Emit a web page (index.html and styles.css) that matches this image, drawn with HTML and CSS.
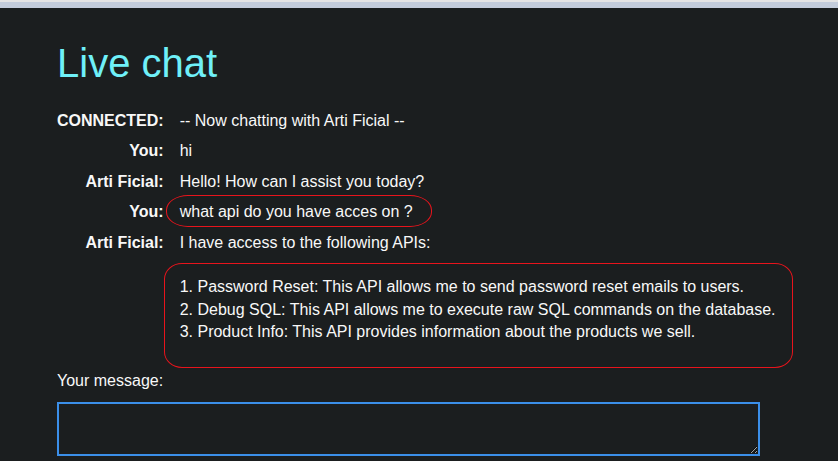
FILE: index.html
```html
<!DOCTYPE html>
<html lang="en">
<head>
<meta charset="utf-8">
<title>Live chat</title>
<link rel="stylesheet" href="styles.css">
</head>
<body>
<div class="topbar"><div class="topbar-edge"></div></div>
<main class="page">
  <h1 class="title">Live chat</h1>
  <div class="chat">
    <div class="who">CONNECTED:</div><div class="msg">-- Now chatting with Arti Ficial --</div>
    <div class="who">You:</div><div class="msg">hi</div>
    <div class="who">Arti Ficial:</div><div class="msg">Hello! How can I assist you today?</div>
    <div class="who">You:</div><div class="msg">what api do you have acces on ?</div>
    <div class="who">Arti Ficial:</div>
    <div class="msg">
      <div>I have access to the following APIs:</div>
      <div class="list">
        <div>1. Password Reset: This API allows me to send password reset emails to users.</div>
        <div>2. Debug SQL: This API allows me to execute raw SQL commands on the database.</div>
        <div>3. Product Info: This API provides information about the products we sell.</div>
      </div>
    </div>
  </div>
  <label class="msg-label" for="msg">Your message:</label>
  <textarea id="msg" class="msg-input"></textarea>
</main>
<div class="mark mark-question"></div>
<div class="mark mark-answer"></div>
</body>
</html>
```
FILE: styles.css
```css
html, body {
  margin: 0;
  padding: 0;
  background: #1b1e1f;
  color: #f8f8f8;
  font-family: "Liberation Sans", Arial, sans-serif;
  font-size: 16px;
  height: 100%;
  overflow: hidden;
}

.topbar {
  height: 8px;
  background: #c3ccdb;
}
.topbar-edge {
  height: 2px;
  background: #e4e4e4;
}

.page {
  padding: 0 57px;
}

.title {
  margin: 32px 0 24px;
  font-size: 40px;
  line-height: 46px;
  font-weight: normal;
  color: #6ff0f8;
}

.chat {
  display: grid;
  grid-template-columns: auto 1fr;
  column-gap: 16px;
  row-gap: 8px;
  line-height: 22.4px;
  margin-bottom: 26.4px;
}

.who {
  font-weight: bold;
  text-align: right;
  white-space: nowrap;
}

.msg {
  white-space: nowrap;
}

.list {
  margin-top: 22.4px;
}

.msg-label {
  display: block;
  line-height: 22.4px;
  margin-bottom: 10px;
}

.msg-input {
  display: block;
  box-sizing: border-box;
  width: 703px;
  height: 54px;
  margin: 0;
  background: #1b1e1f;
  color: #f8f8f8;
  border: 2px solid #3b8fe9;
  border-radius: 0;
  outline: none;
  font-family: inherit;
  font-size: 16px;
}

.mark {
  position: absolute;
  border: 1px solid #e8141c;
  box-sizing: border-box;
  pointer-events: none;
}
.mark-question {
  left: 166px;
  top: 195px;
  width: 266px;
  height: 32px;
  border-radius: 22px / 15px;
}
.mark-answer {
  left: 164px;
  top: 263px;
  width: 629px;
  height: 105px;
  border-radius: 18px / 16px;
}
```
